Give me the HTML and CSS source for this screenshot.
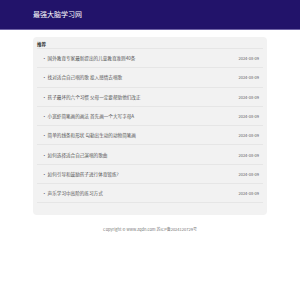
FILE: index.html
```html
<!DOCTYPE html>
<html lang="zh-CN">
<head>
<meta charset="utf-8">
<title>最强大脑学习网</title>
<link rel="stylesheet" href="styles.css">
</head>
<body>
<header class="top">
  <div class="logo">最强大脑学习网</div>
</header>
<main class="card">
  <div class="card-title">推荐</div>
  <ul class="list">
    <li class="row"><span class="t">• 国外教育专家最新提出的儿童教育准则40条</span><span class="d">2024-08-09</span></li>
    <li class="row"><span class="t">• 找对适合自己唱的歌 投入感情去唱歌</span><span class="d">2024-08-09</span></li>
    <li class="row"><span class="t">• 孩子最坏的六个习惯 父母一定要帮助他们改正</span><span class="d">2024-08-09</span></li>
    <li class="row"><span class="t">• 小宽虾简笔画的画法 首先画一个大写字母A</span><span class="d">2024-08-09</span></li>
    <li class="row"><span class="t">• 简单的线条和形状 勾勒出生动的动物简笔画</span><span class="d">2024-08-09</span></li>
    <li class="row"><span class="t">• 如何选择适合自己演唱的歌曲</span><span class="d">2024-08-09</span></li>
    <li class="row"><span class="t">• 如何引导和鼓励孩子进行体育锻炼?</span><span class="d">2024-08-09</span></li>
    <li class="row"><span class="t">• 声乐学习中高阶的练习方式</span><span class="d">2024-08-09</span></li>
  </ul>
</main>
<footer class="foot">Copyright © www.zqdn.com 苏ICP备2024120729号</footer>
</body>
</html>
```
FILE: styles.css
```css
* { box-sizing: border-box; }
html, body { margin: 0; padding: 0; background: #ffffff; }
body { font-family: "Noto Sans CJK SC", "Noto Sans", sans-serif; }
.top {
  height: 30px;
  background: #22136a;
  border-bottom: 1px solid #6f63a6;
  display: flex;
  align-items: center;
  padding-left: 33px;
}
.logo { color: #ffffff; font-size: 7px; line-height: 1; }
.card {
  width: 234px;
  margin: 7px auto 0;
  background: #f2f2f2;
  border-radius: 4px;
  padding: 4px 4px 12px;
}
.card-title {
  font-size: 4.5px;
  font-weight: bold;
  color: #333;
  line-height: 7px;
  padding-left: 0;
}
.list { list-style: none; margin: 0; padding: 0; border-top: 1px solid #e6e6e6; }
.row {
  height: 19.3px;
  border-bottom: 1px solid #e6e6e6;
  display: flex;
  align-items: center;
  justify-content: space-between;
  padding: 0 4px 0 5px;
}
.t { font-size: 4.6px; color: #555; }
.d { font-size: 4px; color: #666; }
.foot {
  text-align: center;
  font-size: 4px;
  color: #777;
  margin-top: 11px;
}
```
